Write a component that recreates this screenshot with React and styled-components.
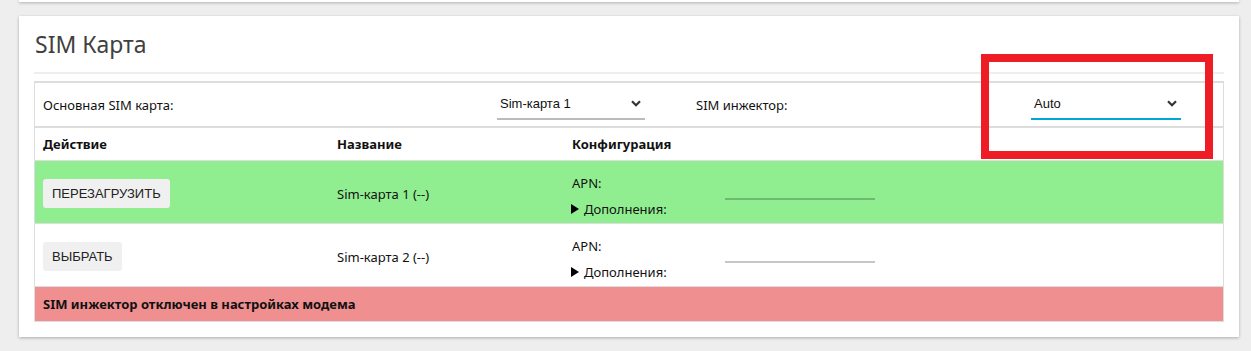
import React, { useState } from 'react';
import styled, { createGlobalStyle } from 'styled-components';

const GlobalStyle = createGlobalStyle`
  html, body {
    margin: 0;
    padding: 0;
    background: #eeeeee;
    font-family: "Noto Sans", "Open Sans", sans-serif;
    font-size: 13px;
    color: #111;
  }
  * { box-sizing: border-box; }
`;

const Page = styled.div`
  width: 1251px;
  height: 351px;
  overflow: hidden;
  padding: 0 12px 0 19px;
  position: relative;
`;

const PrevCard = styled.div`
  height: 2px;
  width: 1220px;
  background: #fff;
  box-shadow: 0 1px 3px rgba(0, 0, 0, 0.3);
`;

const Card = styled.section`
  position: relative;
  width: 1220px;
  margin-top: 14px;
  background: #fff;
  box-shadow: 0 1px 3px rgba(0, 0, 0, 0.28);
  padding: 13px 15px 15px 15px;
`;

const Title = styled.h2`
  margin: 0;
  font-weight: 400;
  font-size: 23px;
  line-height: 30px;
  color: #404040;
  padding-left: 1px;
  padding-bottom: 13px;
  border-bottom: 2px solid #eeeeee;
`;

const Table = styled.div`
  margin-top: 7px;
  border: 2px solid #dddddd;
  border-left-width: 1px;
  border-right-width: 1px;
  border-bottom-width: 1px;
`;

const SelectRow = styled.div`
  display: grid;
  grid-template-columns: 454px 199px 335px 1fr;
  align-items: center;
  height: 45px;
  border-bottom: 2px solid #dddddd;
`;

const Cell = styled.div`
  padding: 0 8px;
`;

const SelectBox = styled.div`
  width: ${p => p.$w}px;
  height: 28px;
  border-bottom: 2px solid ${p => (p.$active ? '#00a8d6' : '#bbbbbb')};
  display: flex;
  align-items: center;
  justify-content: space-between;
  padding: 0 4px 4px 3px;
  font-family: "Liberation Sans", Arial, sans-serif;
  font-size: 13px;
  color: #111;
  margin-top: 3px;
`;

const Chevron = () => (
  <svg width="10" height="7" viewBox="0 0 10 7">
    <path d="M1 1.2 L5 5.2 L9 1.2" fill="none" stroke="#333" strokeWidth="2.2" />
  </svg>
);

const Grid = styled.div`
  display: grid;
  grid-template-columns: 294px 235px 1fr;
  align-items: center;
  background: ${p => p.$bg || '#fff'};
  border-bottom: 1px solid #dddddd;
  min-height: ${p => p.$h}px;
`;

const HeadCell = styled.div`
  padding: 0 8px;
  font-weight: 700;
  font-size: 13px;
`;

const NameCell = styled(Cell)`
  padding-top: 3px;
`;

const Button = styled.button`
  font-family: "Liberation Sans", Arial, sans-serif;
  font-size: 13px;
  color: #222;
  background: #f0f0f0;
  border: none;
  border-radius: 3px;
  height: 29px;
  padding: 0 9px;
  margin-top: 2px;
  cursor: pointer;
`;

const Config = styled.div`
  display: grid;
  grid-template-columns: 153px 150px;
  grid-template-rows: 26px 26px;
  align-items: center;
  padding: 8px 8px 0;
`;

const ApnInput = styled.div`
  grid-row: 1;
  grid-column: 2;
  height: 2px;
  background: rgba(0, 0, 0, 0.22);
  align-self: end;
  margin-bottom: -4px;
`;

const Extra = styled.div`
  display: flex;
  align-items: center;
  gap: 5px;
  margin-left: -1px;
  &::before {
    content: '';
    border-left: 8px solid #000;
    border-top: 5px solid transparent;
    border-bottom: 5px solid transparent;
  }
`;

const Alert = styled.div`
  background: #f08f8f;
  height: 34px;
  display: flex;
  align-items: center;
  padding: 0 8px;
  font-weight: 700;
`;

const Marker = styled.div`
  position: absolute;
  left: 962px;
  top: 38px;
  width: 232px;
  height: 105px;
  border: 8px solid #ee1c24;
  pointer-events: none;
`;

const sims = [
  { action: 'ПЕРЕЗАГРУЗИТЬ', name: 'Sim-карта 1 (--)', active: true },
  { action: 'ВЫБРАТЬ', name: 'Sim-карта 2 (--)', active: false },
];

export default function App() {
  const [primary] = useState('Sim-карта 1');
  const [injector] = useState('Auto');

  return (
    <Page>
      <GlobalStyle />
      <PrevCard />
      <Card>
        <Title>SIM Карта</Title>
        <Table>
          <SelectRow>
            <Cell>Основная SIM карта:</Cell>
            <Cell>
              <SelectBox $w={148}>
                <span>{primary}</span>
                <Chevron />
              </SelectBox>
            </Cell>
            <Cell>SIM инжектор:</Cell>
            <Cell>
              <SelectBox $w={150} $active>
                <span>{injector}</span>
                <Chevron />
              </SelectBox>
            </Cell>
          </SelectRow>
          <Grid $h={33}>
            <HeadCell>Действие</HeadCell>
            <HeadCell>Название</HeadCell>
            <HeadCell>Конфигурация</HeadCell>
          </Grid>
          {sims.map(sim => (
            <Grid key={sim.name} $h={63} $bg={sim.active ? '#90ee90' : '#fff'}>
              <Cell>
                <Button>{sim.action}</Button>
              </Cell>
              <NameCell>{sim.name}</NameCell>
              <Config>
                <span>APN:</span>
                <ApnInput />
                <Extra>Дополнения:</Extra>
              </Config>
            </Grid>
          ))}
          <Alert>SIM инжектор отключен в настройках модема</Alert>
        </Table>
        <Marker />
      </Card>
    </Page>
  );
}
